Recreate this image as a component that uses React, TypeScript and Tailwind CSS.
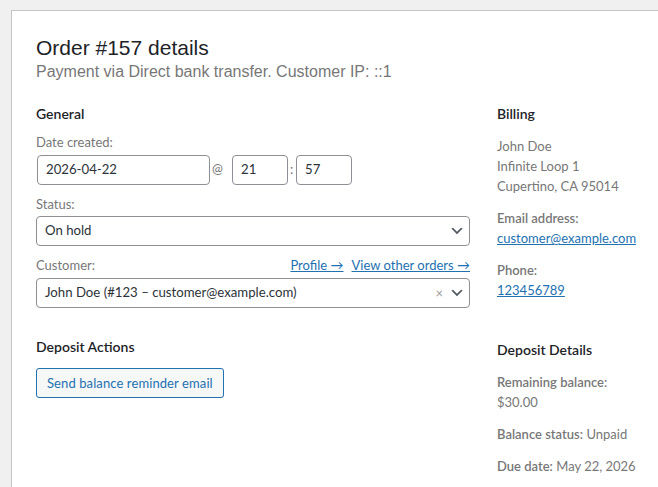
import React from "react";

const Chevron = () => (
  <svg width="16" height="16" viewBox="0 0 20 20" className="block">
    <path d="M5 6l5 5 5-5 2 1-7 7-7-7 2-1z" fill="#50575e" />
  </svg>
);

const Label = ({ children, className = "" }: { children: React.ReactNode; className?: string }) => (
  <div className={"text-[13px] leading-[18px] text-[#777] " + className}>{children}</div>
);

export default function App() {
  return (
    <div className="w-[658px] h-[487px] bg-[#f0f0f1] pt-[10px] pl-[11px] overflow-hidden font-['Lato','Segoe_UI',sans-serif]">
      <div className="h-full bg-white border-l border-t border-[#c3c4c7] pl-[24px] pt-[24px]">
        <h2 className="text-[21px] leading-[25px] text-[#1d2327] font-['Liberation_Sans',Arial,sans-serif] font-normal">
          Order #157 details
        </h2>
        <p className="mt-[2px] text-[16px] leading-[20px] text-[#777] font-['Liberation_Sans',Arial,sans-serif]">
          Payment via Direct bank transfer. Customer IP: ::1
        </p>

        <div className="flex mt-[22px]">
          {/* Left column */}
          <div className="w-[434px] shrink-0">
            <h3 className="text-[14px] leading-[20px] font-semibold text-[#1d2327]">General</h3>

            <Label className="mt-[9px]">Date created:</Label>
            <div className="flex items-center mt-[4px]">
              <div className="ml-[1px] w-[173px] h-[30px] border border-[#8c8f94] rounded-[4px] flex items-center pl-[8px] text-[13.2px] text-[#2c3338]">
                2026-04-22
              </div>
              <span className="w-[22px] pl-[2px] text-[13px] text-[#777] leading-[18px] -mt-[4px]">@</span>
              <div className="w-[56px] h-[30px] border border-[#8c8f94] rounded-[4px] flex items-center pl-[8px] text-[13.2px] text-[#2c3338]">
                21
              </div>
              <span className="w-[8px] pl-[2px] text-[13px] text-[#777] leading-[18px] -mt-[2px]">:</span>
              <div className="w-[56px] h-[30px] border border-[#8c8f94] rounded-[4px] flex items-center pl-[8px] text-[13.2px] text-[#2c3338]">
                57
              </div>
            </div>

            <Label className="mt-[10px]">Status:</Label>
            <div className="mt-[3px] w-[434px] h-[30px] border border-[#8c8f94] rounded-[4px] flex items-center justify-between pl-[8px] pr-[4px] text-[13.2px] text-[#2c3338]">
              <span>On hold</span>
              <Chevron />
            </div>

            <div className="flex items-center justify-between mt-[10px] text-[13px] leading-[18px]">
              <span className="text-[#777]">Customer:</span>
              <span className="flex gap-[8px]">
                <span className="text-[#2271b1] underline">Profile →</span>
                <span className="text-[#2271b1] underline">View other orders →</span>
              </span>
            </div>
            <div className="mt-[4px] w-[434px] h-[30px] border border-[#8c8f94] rounded-[4px] flex items-center justify-between pl-[8px] pr-[4px] text-[13.2px] text-[#2c3338]">
              <span>John Doe (#123 – customer@example.com)</span>
              <span className="flex items-center gap-[6px]">
                <span className="text-[#999] text-[13px] leading-none">×</span>
                <Chevron />
              </span>
            </div>

            <h3 className="mt-[29px] text-[14px] leading-[20px] font-semibold text-[#1d2327]">Deposit Actions</h3>
            <button className="mt-[11px] h-[30px] px-[10px] border border-[#2271b1] rounded-[3px] bg-[#f6f7f7] text-[#2271b1] text-[13px] leading-[28px] tracking-[0.1px]">
              Send balance reminder email
            </button>
          </div>

          {/* Right column */}
          <div className="ml-[27px] shrink-0 w-[160px] text-[13px] leading-[20px] text-[#777]">
            <h3 className="text-[14px] leading-[20px] font-semibold text-[#1d2327]">Billing</h3>
            <p className="mt-[12px]">
              John Doe
              <br />
              Infinite Loop 1
              <br />
              Cupertino, CA 95014
            </p>
            <p className="mt-[12px]">
              <span className="font-semibold">Email address:</span>
              <br />
              <span className="text-[#2271b1] underline">customer@example.com</span>
            </p>
            <p className="mt-[12px]">
              <span className="font-semibold">Phone:</span>
              <br />
              <span className="text-[#2271b1] underline">123456789</span>
            </p>

            <h3 className="mt-[40px] text-[14px] leading-[20px] font-semibold text-[#1d2327]">Deposit Details</h3>
            <p className="mt-[12px]">
              <span className="font-semibold">Remaining balance:</span>
              <br />
              $30.00
            </p>
            <p className="mt-[12px]">
              <span className="font-semibold">Balance status:</span> Unpaid
            </p>
            <p className="mt-[12px]">
              <span className="font-semibold">Due date:</span> May 22, 2026
            </p>
          </div>
        </div>
      </div>
    </div>
  );
}
